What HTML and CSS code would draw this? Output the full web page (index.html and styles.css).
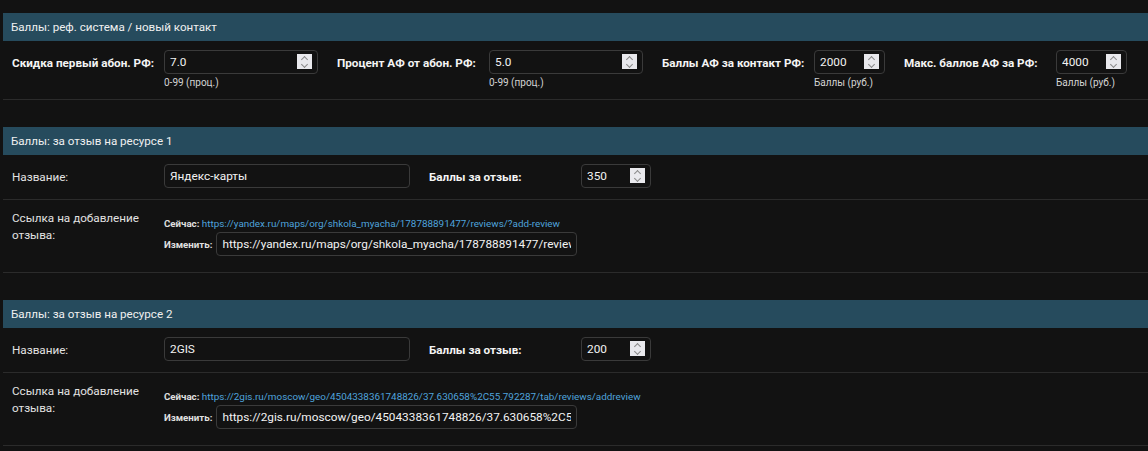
FILE: index.html
```html
<!DOCTYPE html>
<html lang="ru">
<head>
    <meta charset="UTF-8">
    <meta name="viewport" content="width=device-width, initial-scale=1.0">
    <title>Баллы</title>
    <link rel="stylesheet" href="styles.css">
</head>
<body>
    <div class="content">
        <fieldset class="module">
            <h2>Баллы: реф. система / новый контакт</h2>
            <div class="form-row with-help">
                <div class="field">
                    <label class="required">Скидка первый абон. РФ:</label>
                    <div class="widget">
                        <div class="num wide"><input type="text" value="7.0"><span class="spin"></span></div>
                        <div class="help">0-99 (проц.)</div>
                    </div>
                </div>
                <div class="field">
                    <label class="required">Процент АФ от абон. РФ:</label>
                    <div class="widget">
                        <div class="num wide"><input type="text" value="5.0"><span class="spin"></span></div>
                        <div class="help">0-99 (проц.)</div>
                    </div>
                </div>
                <div class="field">
                    <label class="required">Баллы АФ за контакт РФ:</label>
                    <div class="widget">
                        <div class="num"><input type="text" value="2000"><span class="spin"></span></div>
                        <div class="help">Баллы (руб.)</div>
                    </div>
                </div>
                <div class="field">
                    <label class="required">Макс. баллов АФ за РФ:</label>
                    <div class="widget">
                        <div class="num"><input type="text" value="4000"><span class="spin"></span></div>
                        <div class="help">Баллы (руб.)</div>
                    </div>
                </div>
            </div>
        </fieldset>

        <fieldset class="module">
            <h2>Баллы: за отзыв на ресурсе 1</h2>
            <div class="form-row">
                <div class="field">
                    <label>Название:</label>
                    <input class="text" type="text" value="Яндекс-карты">
                </div>
                <div class="field">
                    <label class="required">Баллы за отзыв:</label>
                    <div class="num short"><input type="text" value="350"><span class="spin"></span></div>
                </div>
            </div>
            <div class="form-row">
                <div class="field">
                    <label class="multi">Ссылка на добавление отзыва:</label>
                    <div class="url">
                        <div class="current">Сейчас: <a href="#">https://yandex.ru/maps/org/shkola_myacha/178788891477/reviews/?add-review</a></div>
                        <div class="change">Изменить: <input type="text" value="https://yandex.ru/maps/org/shkola_myacha/178788891477/reviews/?add-review"></div>
                    </div>
                </div>
            </div>
        </fieldset>

        <fieldset class="module">
            <h2>Баллы: за отзыв на ресурсе 2</h2>
            <div class="form-row">
                <div class="field">
                    <label>Название:</label>
                    <input class="text" type="text" value="2GIS">
                </div>
                <div class="field">
                    <label class="required">Баллы за отзыв:</label>
                    <div class="num short"><input type="text" value="200"><span class="spin"></span></div>
                </div>
            </div>
            <div class="form-row">
                <div class="field">
                    <label class="multi">Ссылка на добавление отзыва:</label>
                    <div class="url">
                        <div class="current">Сейчас: <a href="#">https://2gis.ru/moscow/geo/4504338361748826/37.630658%2C55.792287/tab/reviews/addreview</a></div>
                        <div class="change">Изменить: <input type="text" value="https://2gis.ru/moscow/geo/4504338361748826/37.630658%2C55.792287/tab/reviews/addreview"></div>
                    </div>
                </div>
            </div>
        </fieldset>
    </div>
</body>
</html>
```

FILE: styles.css
```css
* {
    margin: 0;
    padding: 0;
    box-sizing: border-box;
}

body {
    background: #121212;
    color: #e6e6e6;
    font-family: Roboto, "Liberation Sans", sans-serif;
    font-size: 11.7px;
}

.content {
    padding: 13px 0 0 3px;
}

fieldset.module {
    border: none;
    margin-bottom: 27px;
}

.module h2 {
    background: #264b5d;
    color: #f0f0f0;
    font-size: 11.6px;
    font-weight: normal;
    line-height: 16px;
    padding: 6px 8px;
}

.form-row {
    display: flex;
    gap: 19px;
    padding: 9px 9px 11px;
    border-bottom: 1px solid #2b2b2b;
}

.field {
    display: flex;
    align-items: flex-start;
}

.field label {
    width: 152px;
    flex-shrink: 0;
    line-height: 17px;
    padding: 5px 10px 0 0;
    color: #e2e2e2;
    white-space: nowrap;
}

.field label.multi {
    white-space: normal;
    padding-top: 1px;
    padding-right: 20px;
}

.field label.required {
    font-weight: bold;
    color: #f4f4f4;
}

input {
    height: 24px;
    background: #121212;
    border: 1px solid #3a3a3a;
    border-radius: 4px;
    color: #f2f2f2;
    font-family: Roboto, "Liberation Sans", sans-serif;
    font-size: 11.8px;
    padding: 0 5px;
    outline: none;
}

input.text {
    width: 246px;
}

.num {
    position: relative;
    width: 71px;
}

.num.wide {
    width: 154px;
}

.num.short {
    width: 70px;
}

.num input {
    width: 100%;
    padding-right: 24px;
}

.spin {
    position: absolute;
    right: 6px;
    top: 4px;
    width: 15px;
    height: 15px;
    background: #e9e9ed;
}

.spin::before,
.spin::after {
    content: "";
    position: absolute;
    left: 5px;
    width: 4px;
    height: 4px;
    border-left: 1px solid #8a8a8a;
    border-top: 1px solid #8a8a8a;
}

.spin::before {
    top: 3px;
    transform: rotate(45deg);
}

.spin::after {
    top: 8px;
    transform: rotate(225deg);
}

.help {
    font-size: 10px;
    line-height: 10px;
    margin-top: 4px;
    color: #d4d4d4;
}

.url {
    padding-top: 8px;
    margin-bottom: 5px;
}

.current,
.change {
    font-size: 9.7px;
    font-weight: bold;
    color: #e0e0e0;
}

.current {
    line-height: 14px;
}

.current a {
    color: #4fa3dc;
    font-size: 9.9px;
    font-weight: normal;
    text-decoration: none;
}

.change {
    display: flex;
    align-items: center;
    gap: 4px;
    margin-top: 1px;
}

.change input {
    width: 361px;
}
```
